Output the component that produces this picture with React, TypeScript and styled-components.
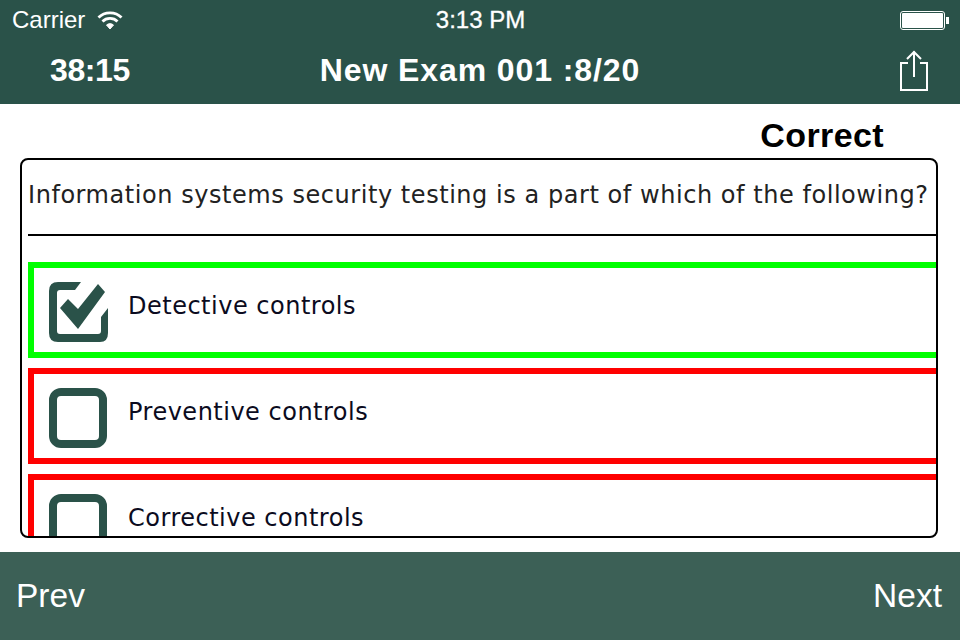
import styled, { createGlobalStyle } from "styled-components";

const OPTIONS = [
  { id: 1, label: "Detective controls", correct: true },
  { id: 2, label: "Preventive controls", correct: false },
  { id: 3, label: "Corrective controls", correct: false },
];

function App() {
  return (
    <Page>
      <GlobalStyle />
      <Header>
        <StatusBar>
          <Carrier>
            Carrier
            <svg width="26" height="20" viewBox="0 0 26 20" fill="none" stroke="#fff">
              <path d="M1.5 7.5C7.5 1.2 18.5 1.2 24.5 7.5" strokeWidth="2.8" />
              <path d="M5.5 11.5C9.5 7.4 16.5 7.4 20.5 11.5" strokeWidth="2.8" />
              <path d="M9.5 15C11.5 13.2 14.5 13.2 16.5 15L13 19Z" fill="#fff" strokeWidth="1" />
            </svg>
          </Carrier>
          <Clock>3:13 PM</Clock>
          <Battery>
            <BatteryBody>
              <BatteryFill />
            </BatteryBody>
            <BatteryTip />
          </Battery>
        </StatusBar>
        <NavBar>
          <Timer>38:15</Timer>
          <Title>New Exam 001 :8/20</Title>
          <ShareButton>
            <svg width="30" height="42" viewBox="0 0 30 42" fill="none" stroke="#fff" strokeWidth="2">
              <path d="M9 13H2V40H28V13H21" />
              <path d="M15 1.5V27" />
              <path d="M8 9L15 2L22 9" />
            </svg>
          </ShareButton>
        </NavBar>
      </Header>

      <Main>
        <ResultRow>
          <Result>Correct</Result>
        </ResultRow>
        <Card>
          <Question>Information systems security testing is a part of which of the following?</Question>
          <Options>
            {OPTIONS.map((option) => (
              <Option key={option.id} correct={option.correct}>
                <IconSlot>
                  <CheckIcon checked={option.correct} />
                </IconSlot>
                <OptionLabel>{option.label}</OptionLabel>
              </Option>
            ))}
          </Options>
        </Card>
      </Main>

      <Footer>
        <FooterButton>Prev</FooterButton>
        <FooterButton>Next</FooterButton>
      </Footer>
    </Page>
  );
}

function CheckIcon({ checked }: { checked: boolean }) {
  if (!checked) {
    return (
      <svg width="60" height="60" viewBox="0 0 60 60" fill="none" stroke="#2a5249" strokeWidth="8">
        <rect x="4" y="4" width="50" height="52" rx="8" />
      </svg>
    );
  }
  return (
    <svg width="60" height="60" viewBox="0 0 60 60" fill="#2a5249">
      <path d="M32 0H9Q0 0 0 9V51Q0 60 9 60H51Q59 60 59 51V26L52 35V49Q52 52 49 52H11Q8 52 8 49V11Q8 8 11 8H26Z" />
      <path d="M11 26L19 17L29 27L49 2L56 10L29 47Z" />
    </svg>
  );
}

export default App;

/* ---------------- styled-components ---------------- */

const GlobalStyle = createGlobalStyle`
  html, body {
    margin: 0;
    padding: 0;
    background: #fff;
  }
`;

const Page = styled.div`
  width: 960px;
  height: 640px;
  display: flex;
  flex-direction: column;
  overflow: hidden;
  font-family: "Liberation Sans", Arial, sans-serif;
`;

const Header = styled.div`
  height: 104px;
  background: #2a5249;
  color: #fff;
  display: flex;
  flex-direction: column;
`;

const StatusBar = styled.div`
  height: 40px;
  display: grid;
  grid-template-columns: 1fr auto 1fr;
  align-items: center;
  padding: 0 11px 0 12px;
  font-size: 24px;
`;

const Carrier = styled.div`
  display: flex;
  align-items: center;
  gap: 12px;
`;

const Clock = styled.div`
  -webkit-text-stroke: 0.3px #fff;
`;

const Battery = styled.div`
  justify-self: end;
  display: flex;
  align-items: center;
  gap: 1px;
`;

const BatteryBody = styled.div`
  width: 45px;
  height: 19px;
  box-sizing: border-box;
  padding: 1px;
  border: 1px solid #fff;
  border-radius: 3px;
`;

const BatteryFill = styled.div`
  height: 100%;
  background: #fff;
  border-radius: 1px;
`;

const BatteryTip = styled.div`
  width: 3px;
  height: 7px;
  background: #fff;
`;

const NavBar = styled.div`
  flex: 1;
  display: grid;
  grid-template-columns: 1fr auto 1fr;
  align-items: center;
  padding: 0 31px;
  font-size: 32px;
  font-weight: bold;
`;

const Timer = styled.div`
  padding-left: 19px;
  letter-spacing: -0.4px;
  margin-bottom: 4px;
`;

const Title = styled.div`
  letter-spacing: 0.9px;
  margin-bottom: 4px;
`;

const ShareButton = styled.div`
  justify-self: end;
  display: flex;
  height: 42px;
  margin-bottom: 2px;
`;

const Main = styled.div`
  flex: 1;
  min-height: 0;
  display: flex;
  flex-direction: column;
  padding: 0 22px 14px 20px;
`;

const ResultRow = styled.div`
  height: 54px;
  display: flex;
  justify-content: flex-end;
  align-items: center;
  padding-right: 54px;
`;

const Result = styled.div`
  font-size: 34px;
  font-weight: bold;
  letter-spacing: 0.4px;
  color: #000;
  margin-top: 8px;
`;

const Card = styled.div`
  flex: 1;
  min-height: 0;
  border: 2px solid #000;
  border-radius: 8px;
  overflow: hidden;
  padding-left: 6px;
`;

const Question = styled.div`
  height: 76px;
  box-sizing: border-box;
  padding-bottom: 4px;
  display: flex;
  align-items: center;
  border-bottom: 2px solid #000;
  font-family: "DejaVu Sans", Verdana, sans-serif;
  font-size: 24px;
  letter-spacing: 0.55px;
  white-space: nowrap;
  color: #222;
`;

const Options = styled.div`
  margin: 26px -20px 0 0;
  display: flex;
  flex-direction: column;
  gap: 10px;
`;

const Option = styled.div<{ correct: boolean }>`
  flex: none;
  height: 96px;
  box-sizing: border-box;
  border: 6px solid ${(p) => (p.correct ? "#00ff00" : "#ff0000")};
  display: flex;
  align-items: center;
  padding-left: 15px;
  gap: 19px;
`;

const IconSlot = styled.div`
  display: flex;
  margin-top: 4px;
`;

const OptionLabel = styled.div`
  font-family: "DejaVu Sans", Verdana, sans-serif;
  font-size: 24px;
  letter-spacing: 0.5px;
  color: #0b0b20;
  margin-bottom: 8px;
`;

const Footer = styled.div`
  height: 88px;
  flex: none;
  background: #3c6056;
  color: #fff;
  display: flex;
  justify-content: space-between;
  align-items: center;
  padding: 0 18px 0 16px;
`;

const FooterButton = styled.div`
  font-size: 33.5px;
`;
